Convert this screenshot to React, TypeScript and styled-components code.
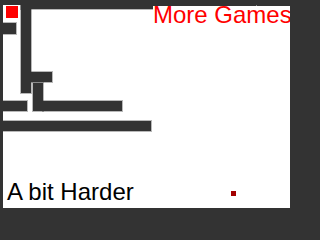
import styled, { createGlobalStyle } from 'styled-components'

interface IWall {
  x: number
  y: number
  w: number
  h: number
}

// maze walls, in board pixels
const walls: IWall[] = [
  { x: 21, y: 0, w: 235, h: 9 },
  { x: 257, y: 0, w: 33, h: 9 },
  { x: 21, y: 0, w: 10, h: 93 },
  { x: 0, y: 23, w: 16, h: 11 },
  { x: 31, y: 72, w: 21, h: 10 },
  { x: 33, y: 83, w: 10, h: 28 },
  { x: 43, y: 101, w: 79, h: 10 },
  { x: 0, y: 101, w: 27, h: 10 },
  { x: 0, y: 121, w: 151, h: 10 }
]

const GlobalStyle = createGlobalStyle`
  html, body {
    margin: 0;
    padding: 0;
    background: #333;
    overflow: hidden;
  }
`

const Board = styled.div`
  position: relative;
  box-sizing: border-box;
  width: 300px;
  height: 218px;
  padding: 5px 10px 10px 3px;
  background: #333;
  font-family: 'Liberation Sans', Arial, sans-serif;
`

const Field = styled.div`
  box-sizing: border-box;
  height: 100%;
  display: flex;
  flex-direction: column;
  justify-content: flex-end;
  padding: 0 0 3.6px 4px;
  background: #fff;
`

const LevelName = styled.div`
  font-size: 24px;
  line-height: 24px;
  color: #000;
`

const Wall = styled.div<{ $x: number; $y: number; $w: number; $h: number }>`
  position: absolute;
  left: ${(p) => p.$x}px;
  top: ${(p) => p.$y}px;
  width: ${(p) => p.$w}px;
  height: ${(p) => p.$h}px;
  background: #333;
  box-shadow: 0 0 0 1px rgba(51, 51, 51, 0.35);
`

const Square = styled.div<{ $x: number; $y: number; $size: number; $color: string }>`
  position: absolute;
  left: ${(p) => p.$x}px;
  top: ${(p) => p.$y}px;
  width: ${(p) => p.$size}px;
  height: ${(p) => p.$size}px;
  background: ${(p) => p.$color};
`

// the link is clipped by the right frame, as on the original canvas
const MoreGames = styled.a`
  position: absolute;
  left: 153px;
  top: 6px;
  width: 137px;
  overflow: hidden;
  white-space: nowrap;
  background: #fff;
  color: #f00;
  font-size: 24px;
  line-height: 17px;
  text-decoration: none;
  cursor: pointer;
`

export default function App() {
  return (
    <>
      <GlobalStyle />
      <Board>
        <Field>
          <LevelName>A bit Harder</LevelName>
        </Field>

        {walls.map((w, i) => (
          <Wall key={i} $x={w.x} $y={w.y} $w={w.w} $h={w.h} />
        ))}

        {/* player and goal */}
        <Square $x={6} $y={6} $size={12} $color='#f00' />
        <Square $x={231} $y={191} $size={5} $color='#a30000' />

        <MoreGames href='#!'>More Games</MoreGames>
      </Board>
    </>
  )
}
